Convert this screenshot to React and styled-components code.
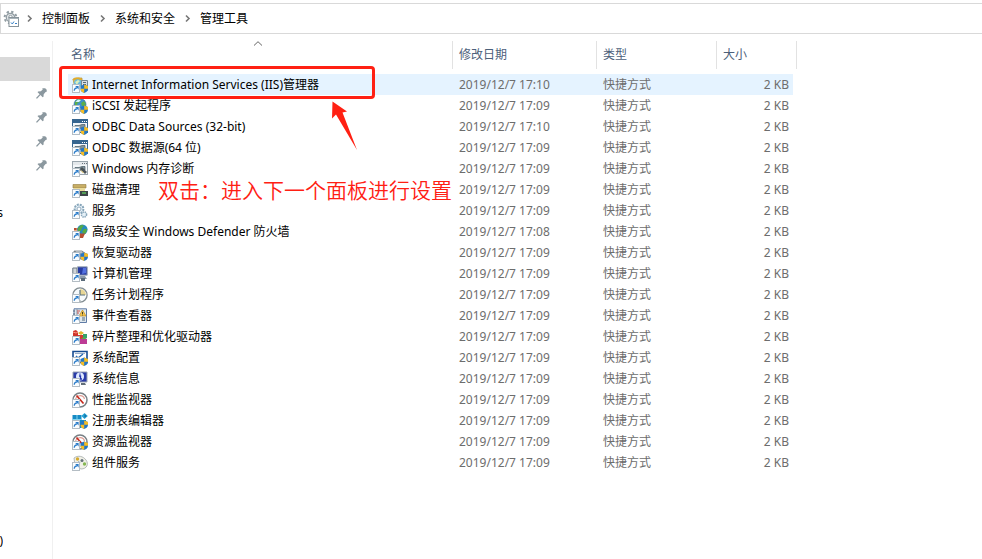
import React from "react";
import styled, { createGlobalStyle } from "styled-components";

const GlobalStyle = createGlobalStyle`
  * { box-sizing: border-box; }
  body {
    margin: 0;
    background: #fff;
    color: #000;
    font: 12px/21px "Noto Sans", "Noto Sans CJK SC", sans-serif;
  }
`;

const Page = styled.div`
  display: flex;
  flex-direction: column;
  min-height: 100vh;
  overflow: hidden;
  padding-top: 3px;
`;

const AddressBar = styled.nav`
  display: flex;
  align-items: center;
  height: 31px;
  padding-left: 2px;
  border: 1px solid #d9d9d9;
  border-right: 0;
`;

const FolderIcon = styled.svg`
  width: 16px;
  height: 17px;
  margin-right: -2px;
  flex: none;
`;

const CrumbArrow = styled.svg`
  width: 25px;
  height: 9px;
  flex: none;
  fill: none;
  stroke: #777;
  stroke-width: 1.6;
`;

const Crumb = styled.a`
  color: #000;
  text-decoration: none;
  white-space: nowrap;
`;

const Body = styled.div`
  display: flex;
  flex: 1;
  padding-top: 7px;
`;

const Sidebar = styled.nav`
  flex: none;
  width: 53px;
  border-right: 1px solid #f0f0f0;
  padding: 16px 2px 0 0;
`;

const SideList = styled.ul`
  list-style: none;
  margin: 0;
  padding: 0;
`;

const SideItem = styled.li`
  display: flex;
  align-items: center;
  justify-content: flex-end;
  height: 24px;
  padding-right: 3px;
  background: ${(p) => (p.$selected ? "#d9d9d9" : "transparent")};
`;

const SideLabel = styled.a`
  display: flex;
  justify-content: flex-end;
  width: 3px;
  overflow: hidden;
  color: #000;
  text-decoration: none;
  line-height: 24px;
  margin-top: ${(p) => p.$gap}px;
`;

const PinIcon = styled.svg`
  width: 11px;
  height: 11px;
  fill: #8b989f;
`;

const Main = styled.main`
  position: relative;
  flex: 1;
  min-width: 0;
  padding-left: 15px;
`;

const FileTable = styled.table`
  table-layout: fixed;
  width: 729px;
  border-collapse: separate;
  border-spacing: 0;
`;

const Col = styled.col`
  width: ${(p) => p.$w}px;
`;

const HeadCell = styled.th`
  position: relative;
  padding: 0 0 5px;
  text-align: left;
  font-weight: 400;
  color: #4c607a;
`;

const HeadLabel = styled.div`
  height: 28px;
  line-height: 28px;
  padding-left: ${(p) => (p.$first ? 3 : 6)}px;
  border-right: 1px solid #e2e2e2;
`;

const SortArrow = styled.svg`
  position: absolute;
  top: 0;
  left: 185px;
  width: 10px;
  height: 5px;
  fill: none;
  stroke: #666;
`;

const Row = styled.tr`
  background: ${(p) => (p.$selected ? "#e5f3ff" : "transparent")};
`;

const Cell = styled.td`
  height: 21px;
  padding: 0 0 0 6px;
  color: #6d6d6d;
  white-space: nowrap;
`;

const NameCell = styled(Cell)`
  padding-left: 4px;
`;

const SizeCell = styled(Cell)`
  text-align: right;
  padding-right: 4px;
  border-right: 4px solid #fff;
`;

const FileLink = styled.a`
  display: flex;
  align-items: center;
  gap: 4px;
  color: #000;
  text-decoration: none;
  height: 21px;
`;

const FileIcon = styled.svg`
  width: 16px;
  height: 16px;
  flex: none;
`;

const Highlight = styled.div`
  position: absolute;
  top: 25px;
  left: 6px;
  width: 316px;
  height: 33px;
  border: 3px solid #ff2013;
  border-radius: 4px;
  pointer-events: none;
`;

const Pointer = styled.svg`
  position: absolute;
  top: 60px;
  left: 278px;
  width: 28px;
  height: 50px;
  fill: #ff2013;
  pointer-events: none;
`;

const Note = styled.p`
  position: absolute;
  top: 133px;
  left: 105px;
  margin: 0;
  font-family: "Noto Sans CJK SC", sans-serif;
  font-size: 21px;
  font-weight: 350;
  line-height: 30px;
  color: #ff2013;
  white-space: nowrap;
`;

const Shortcut = () => (
  <g>
    <rect x="0.5" y="7.5" width="7" height="8" fill="#fafdff" stroke="#b4bdc4" />
    <path d="M2.2 13.8C2.2 12 3 11 5 10.8" fill="none" stroke="#2b7cc9" strokeWidth="1.2" />
    <path d="M3.2 9H6.6V12.4Z" fill="#2b7cc9" />
  </g>
);

const Shield = () => (
  <g>
    <path d="M12.2 7.5 16 9V11.8C16 13.8 14.3 15.4 12.2 16 10 15.4 8.5 13.8 8.5 11.8V9Z" fill="#2477c5" />
    <path d="M12.2 7.5 16 9V11.8H12.2ZM12.2 11.8V16C10 15.4 8.5 13.8 8.5 11.8Z" fill="#f6bd25" />
  </g>
);

const Globe = () => (
  <g>
    <circle cx="8" cy="6.5" r="6" fill="#3d90d0" stroke="#24618f" strokeWidth="0.6" />
    <path d="M3 4 6 1 9 1.5 8 4 5.5 5 5 8 3 7ZM9 5 12 3 14 6 12 9 10 8Z" fill="#5caf4a" />
    <path d="M3.5 4 6 1.5 9 2 7 4Z" fill="#d8f3ff" />
  </g>
);

const Win = ({ dark }) => (
  <g>
    <rect x="0.5" y="0.5" width="15" height="13" fill="#f4f7fa" stroke={dark ? "#36658f" : "#9aa5ad"} />
    <path d="M1 1H15V4H1Z" fill={dark ? "#36658f" : "#e4e8eb"} />
    <path d="M10 2.5H11M12 2.5H13M14 2.5H15" stroke={dark ? "#fff" : "#66717a"} />
    <path d="M3 6.5H7L10 5.5H13V9H9L7 10H3Z" fill="#82939b" stroke="#465a63" strokeWidth="0.7" />
  </g>
);

const Gauge = () => (
  <g>
    <circle cx="8" cy="8" r="7" fill="#fff" stroke="#777f84" strokeWidth="1.5" />
    <path d="M3.5 8A4.6 4.6 0 0 1 12.5 7" fill="none" stroke="#dc9c94" strokeWidth="1.2" />
    <path d="M4.5 3.5 11.5 11.5" stroke="#c5281c" strokeWidth="1.7" />
  </g>
);

const drawings = {
  iis: (
    <>
      <path d="M1 2H5L6 1H10V4L8 7H2Z" fill="#e9bf4e" stroke="#a98429" strokeWidth="0.6" />
      <circle cx="6" cy="6" r="4" fill="#69b8dc" />
      <path d="M3 5 6 3 8 4 6 6 5 8Z" fill="#dcefbc" />
      <path d="M1 3C3 0.5 7 0.5 10 3" fill="none" stroke="#e0ac2e" strokeWidth="1.6" />
      <path d="M9.5 3.5H15.5V13.5H9.5Z" fill="#d8e0e6" stroke="#748692" />
      <path d="M11 5.5H14M11 7.5H14" stroke="#576873" />
      <Shortcut />
      <Shield />
    </>
  ),
  iscsi: (
    <>
      <Globe />
      <path d="M7 10H14V14H7Z" fill="#a9b3b9" />
      <Shortcut />
      <Shield />
    </>
  ),
  odbc: (
    <>
      <Win dark />
      <Shortcut />
      <Shield />
    </>
  ),
  memory: (
    <>
      <Win />
      <path d="M8 8 10 6 15 11 13 13Z" fill="#4b5358" />
      <path d="M9 9.5 11.5 12" stroke="#d7b54a" />
      <Shortcut />
    </>
  ),
  cleanup: (
    <>
      <path d="M1 2.5H14V6H1Z" fill="#c8ae65" stroke="#927b3e" strokeWidth="0.6" />
      <path d="M2 6H13V9H2Z" fill="#eadb9b" />
      <path d="M7 9H16V14H7Z" fill="#3e4548" />
      <path d="M10 11H14" stroke="#61cf5f" strokeWidth="1.3" />
      <Shortcut />
    </>
  ),
  services: (
    <>
      <circle cx="7" cy="6" r="4.4" fill="#e5f0f7" stroke="#88a6ba" strokeWidth="2" strokeDasharray="2 1" />
      <circle cx="7" cy="6" r="2" fill="#fff" stroke="#91aabd" />
      <circle cx="12" cy="11.5" r="2.6" fill="#e5f0f7" stroke="#88a6ba" strokeWidth="1.5" strokeDasharray="1.4 0.7" />
      <Shortcut />
    </>
  ),
  firewall: (
    <>
      <path d="M2 4H11V14H2Z" fill="#b84e30" />
      <path d="M2 6.5H11M5 4V6M8 8V11" stroke="#e8aa87" />
      <circle cx="10.4" cy="5.6" r="5.2" fill="#278bbd" />
      <path d="M6 4 9 1 12 1.5 10 4 9 7 6 7ZM12 5 15 5 14 9 12 10 10 8Z" fill="#58a943" />
      <path d="M7.5 9.5H13L11 14H7.5Z" fill="#b84e30" />
      <Shortcut />
    </>
  ),
  recovery: (
    <>
      <path d="M2 6H10L14 9V14H2Z" fill="#98a2a8" stroke="#626d73" strokeWidth="0.7" />
      <path d="M4 7H10" stroke="#dce2e5" />
      <Shortcut />
      <Shield />
    </>
  ),
  computer: (
    <>
      <path d="M0.8 2H5V9H0.8Z" fill="#d0d5d9" stroke="#6b7883" />
      <path d="M5.5 0.8H15.2V9.2H5.5Z" fill="#283ca2" stroke="#9aa7b4" />
      <path d="M11 2H14V7L10 8Z" fill="#5371e0" />
      <path d="M8 10H13L15 13H8Z" fill="#8d9cab" />
      <path d="M9 12H13V15H9Z" fill="#596a79" />
      <Shortcut />
    </>
  ),
  schedule: (
    <>
      <circle cx="8" cy="8" r="7.1" fill="#f7fbfd" stroke="#828c91" strokeWidth="1.3" />
      <path d="M8 8V2A6 6 0 0 1 14 8Z" fill="#e7d695" />
      <path d="M8 3V8H13" fill="none" stroke="#58717f" strokeWidth="1.2" />
      <path d="M8 13V14M3 8H2" stroke="#929da3" />
      <Shortcut />
    </>
  ),
  events: (
    <>
      <path d="M2 .8H14.5V14.5H2Z" fill="#dfe7ec" stroke="#5f7ba6" />
      <path d="M5 1V14" stroke="#8997a5" />
      <path d="M1 3H3M1 6H3M10 10H13M10 12H13" stroke="#556a7e" />
      <path d="M10.5 2 14 8H7Z" fill="#f5c54c" stroke="#be8e23" strokeWidth="0.7" />
      <path d="M10.5 4V6M10.5 6.6V7.4" stroke="#473f24" />
      <path d="M5 3H8M5 5H7" stroke="#cd5550" />
      <Shortcut />
    </>
  ),
  defrag: (
    <>
      <path d="M1 2 4 1 6 3V7H1Z" fill="#cf342b" />
      <path d="M6 4 9 2 12 4 9 6Z" fill="#e2b72f" />
      <path d="M6 6H11V10H6Z" fill="#cf3c35" />
      <path d="M11 5 15 5V9L11 9Z" fill="#34a36a" />
      <path d="M8 10 15 10V15H8Z" fill="#bd3b95" />
      <path d="M9 10 12 8 15 10Z" fill="#58a94e" />
      <path d="M1 3 4 4 6 3" fill="none" stroke="#f69886" />
      <Shortcut />
    </>
  ),
  config: (
    <>
      <path d="M1 1.5H15V12.5H1Z" fill="#fff" stroke="#174b91" strokeWidth="1.6" />
      <path d="M3 3.5H13" stroke="#97aeca" />
      <path d="M4 6 6 8 11 4" fill="none" stroke="#2468b4" strokeWidth="1.4" />
      <Shortcut />
      <Shield />
    </>
  ),
  info: (
    <>
      <path d="M1 1H15V11H1Z" fill="#283aa8" stroke="#9ca5b2" />
      <circle cx="8" cy="5.5" r="4" fill="#dfe9ff" />
      <path d="M7 5H8.5V8M7 8H10M8 2.5V3.8" fill="none" stroke="#2234ab" strokeWidth="1.3" />
      <path d="M9 12H13L14 14H9Z" fill="#626e79" />
      <Shortcut />
    </>
  ),
  gauge: (
    <>
      <Gauge />
      <Shortcut />
    </>
  ),
  registry: (
    <>
      <path d="M0.5 2H9.5V15H0.5Z" fill="#168bc5" />
      <path d="M9 7H14V12H9Z" fill="#168bc5" />
      <path d="M5 2V8M0 6.5H10" stroke="#83d4ee" />
      <path d="M12.5 0 15.8 3 12.5 6 9.3 3Z" fill="#23a3d6" />
      <path d="M12.5 1 14.5 3 12.5 4.8Z" fill="#176a9d" />
      <Shortcut />
      <Shield />
    </>
  ),
  resource: (
    <>
      <Gauge />
      <Shortcut />
      <Shield />
    </>
  ),
  component: (
    <>
      <path d="M2 3C6 0 11 1 14 5 17 9 15 14 9 14L3 11Z" fill="#f0f0e7" stroke="#a2a9a8" strokeWidth="0.8" />
      <circle cx="5.5" cy="4" r="1.7" fill="#d6aa30" />
      <circle cx="10" cy="5.5" r="1.5" fill="#637179" />
      <circle cx="12.5" cy="9" r="1.7" fill="#85b752" />
      <path d="M6 7 8 8" stroke="#698aa5" strokeWidth="1.4" />
      <Shortcut />
    </>
  ),
};

const files = [
  ["iis", "Internet Information Services (IIS)管理器", "17:10"],
  ["iscsi", "iSCSI 发起程序", "17:09"],
  ["odbc", "ODBC Data Sources (32-bit)", "17:10"],
  ["odbc", "ODBC 数据源(64 位)", "17:09"],
  ["memory", "Windows 内存诊断", "17:09"],
  ["cleanup", "磁盘清理", "17:09"],
  ["services", "服务", "17:09"],
  ["firewall", "高级安全 Windows Defender 防火墙", "17:08"],
  ["recovery", "恢复驱动器", "17:09"],
  ["computer", "计算机管理", "17:09"],
  ["schedule", "任务计划程序", "17:09"],
  ["events", "事件查看器", "17:09"],
  ["defrag", "碎片整理和优化驱动器", "17:09"],
  ["config", "系统配置", "17:09"],
  ["info", "系统信息", "17:09"],
  ["gauge", "性能监视器", "17:09"],
  ["registry", "注册表编辑器", "17:09"],
  ["resource", "资源监视器", "17:09"],
  ["component", "组件服务", "17:09"],
];

const crumbs = ["控制面板", "系统和安全", "管理工具"];
const columns = ["名称", "修改日期", "类型", "大小"];
const columnWidths = [385, 144, 120, 80];

export default function App() {
  return (
    <>
      <GlobalStyle />
      <Page>
        <AddressBar>
          <FolderIcon viewBox="0 0 16 17" aria-hidden="true">
            <circle cx="7.5" cy="7.5" r="5.9" fill="none" stroke="#929da3" strokeWidth="2" strokeDasharray="2.3 2.33" />
            <circle cx="7.5" cy="7.5" r="4.2" fill="#e2e6e8" stroke="#929da3" strokeWidth="1.2" />
            <circle cx="7.5" cy="7" r="1.7" fill="#fff" stroke="#929da3" />
            <rect x="6" y="7.5" width="9.5" height="9" fill="#fff" stroke="#87939a" />
            <path d="M6 8.5H15.5" stroke="#a9b4ba" />
            <path d="M8 12.5 9.3 14 11 11.5M12 13.5H14" fill="none" stroke="#3b83c8" />
          </FolderIcon>
          {crumbs.map((name) => (
            <React.Fragment key={name}>
              <CrumbArrow viewBox="0 0 25 9" aria-hidden="true">
                <path d="M11 1.5 14 4.5 11 7.5" />
              </CrumbArrow>
              <Crumb href="#">{name}</Crumb>
            </React.Fragment>
          ))}
        </AddressBar>
        <Body>
          <Sidebar>
            <SideList>
              <SideItem $selected />
              {[1, 2, 3, 4].map((n) => (
                <SideItem key={n}>
                  <PinIcon viewBox="0 0 11 11" aria-hidden="true">
                    <path d="M6.3 0.3H9.2L10.7 1.8V3.8L9.6 4.1 7.7 6.3 7.5 8.8 6.6 9.2 4.5 7.1 1.3 10.6H0.2V9.7L3.6 6.3 1.6 4.3 2 3.5 4.8 3.3 6.7 1.5Z" />
                  </PinIcon>
                </SideItem>
              ))}
            </SideList>
            <SideLabel href="#" $gap={24}>s</SideLabel>
            <SideLabel href="#" $gap={304}>)</SideLabel>
          </Sidebar>
          <Main>
            <FileTable>
              <colgroup>
                {columnWidths.map((w, i) => (
                  <Col key={i} $w={w} />
                ))}
              </colgroup>
              <thead>
                <tr>
                  {columns.map((name, i) => (
                    <HeadCell key={name} scope="col">
                      <HeadLabel $first={i === 0}>{name}</HeadLabel>
                      {i === 0 && (
                        <SortArrow viewBox="0 0 10 5" aria-hidden="true">
                          <path d="M1 4.5 5 0.7 9 4.5" />
                        </SortArrow>
                      )}
                    </HeadCell>
                  ))}
                </tr>
              </thead>
              <tbody>
                {files.map(([icon, name, time], i) => (
                  <Row key={name} $selected={i === 0}>
                    <NameCell>
                      <FileLink href="#">
                        <FileIcon viewBox="0 0 16 16" aria-hidden="true">{drawings[icon]}</FileIcon>
                        {name}
                      </FileLink>
                    </NameCell>
                    <Cell>2019/12/7 {time}</Cell>
                    <Cell>快捷方式</Cell>
                    <SizeCell>2 KB</SizeCell>
                  </Row>
                ))}
              </tbody>
            </FileTable>
            <Highlight />
            <Pointer viewBox="0 0 28 50">
              <path d="M1.5 0.5 16 10.5 11.5 11.5 26 49 5 13.5 1 17.5Z" />
            </Pointer>
            <Note>双击：进入下一个面板进行设置</Note>
          </Main>
        </Body>
      </Page>
    </>
  );
}
